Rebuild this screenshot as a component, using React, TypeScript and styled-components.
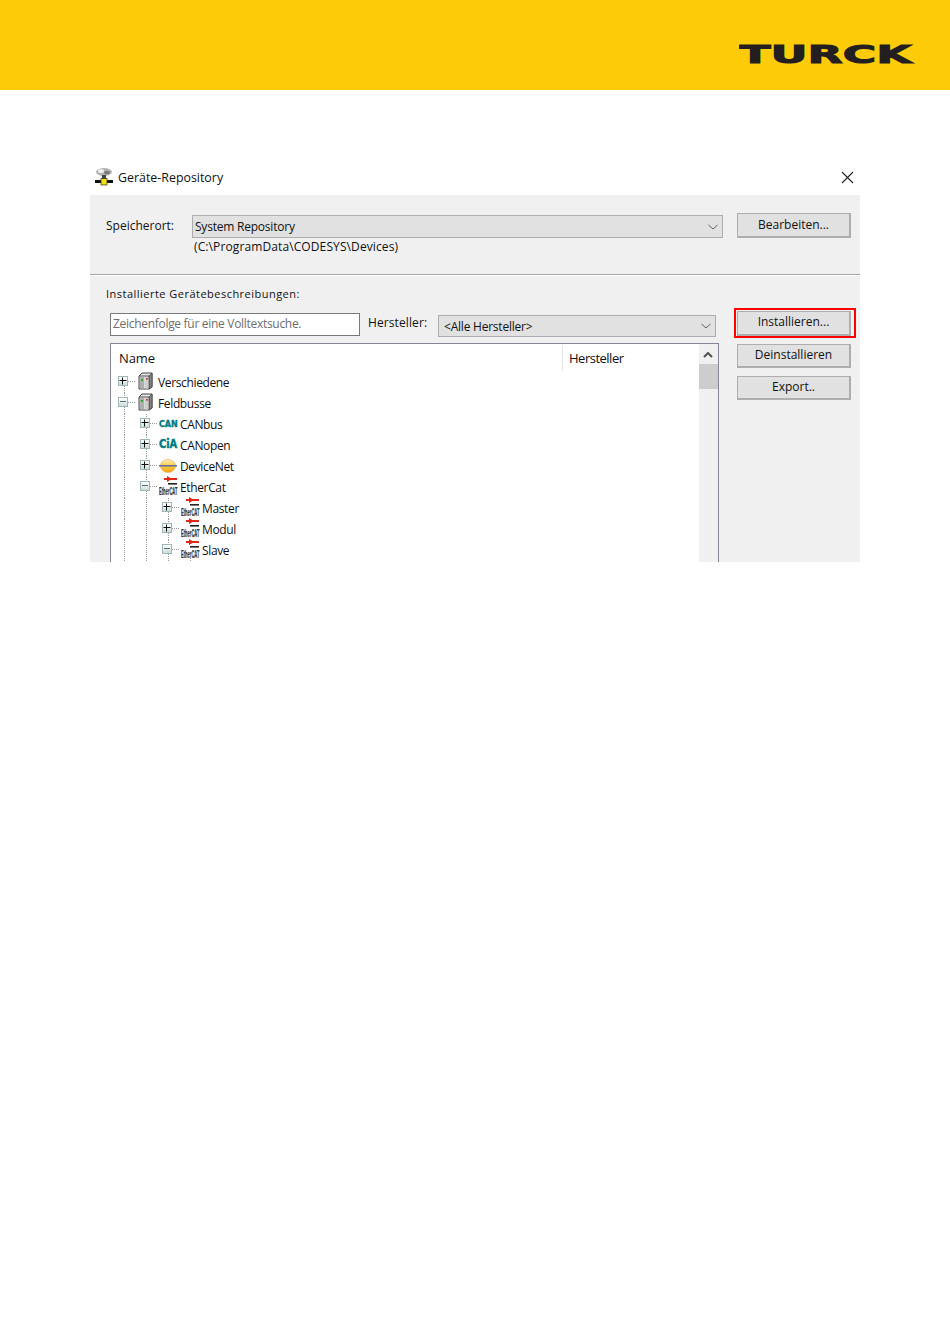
import React from "react";
import styled, { createGlobalStyle } from "styled-components";

const Global = createGlobalStyle`
  html, body { margin: 0; padding: 0; background: #fff; }
  body { font-family: "Open Sans", "Liberation Sans", sans-serif; color: #111; }
`;

const Page = styled.div`
  width: 950px;
  height: 1344px;
  overflow: hidden;
  background: #fff;
`;

const Banner = styled.header`
  height: 90px;
  background: #fecb08;
  display: flex;
  justify-content: flex-end;
  padding: 34px 33px 0 0;
  box-sizing: border-box;
`;

const Dialog = styled.section`
  width: 770px;
  margin: 75px 0 0 90px;
`;

const TitleBar = styled.div`
  height: 30px;
  box-sizing: border-box;
  padding: 0 0 6px 4px;
  display: flex;
  align-items: center;
  gap: 4px;
  font-size: 12.4px;
`;

const TitleText = styled.span`
  flex: 1;
  padding-top: 1px;
`;

const CloseButton = styled.span`
  display: flex;
  margin-right: 6px;
`;

const Panel = styled.div`
  height: 367px;
  overflow: hidden;
  background: #f0f0f0;
`;

const TopSection = styled.div`
  height: 80px;
  box-sizing: border-box;
  display: flex;
  align-items: flex-start;
  padding: 18px 9px 0 16px;
  border-bottom: 1px solid #a6a6a6;
`;

const LocationLabel = styled.label`
  width: 86px;
  font-size: 12px;
  line-height: 16px;
  margin-top: 5px;
`;

const LocationColumn = styled.div`
  width: 531px;
  margin: 2px 14px 0 0;
`;

const Select = styled.div<{ $width?: number; $height: number }>`
  width: ${(p) => (p.$width ? `${p.$width}px` : "100%")};
  height: ${(p) => p.$height}px;
  box-sizing: border-box;
  display: flex;
  align-items: center;
  justify-content: space-between;
  background: #e1e1e1;
  border: 1px solid #adadad;
  font-size: 12px;
  padding: 0 4px 0 2px;
  letter-spacing: -0.22px;
`;

const SelectText = styled.span<{ $inset?: number }>`
  padding-left: ${(p) => p.$inset ?? 0}px;
`;

const PathText = styled.div`
  font-size: 12px;
  line-height: 16px;
  margin: 1px 0 0 2px;
  letter-spacing: 0.11px;
`;

const Button = styled.button<{ $height?: number; $pad?: number; $marked?: boolean }>`
  position: relative;
  display: block;
  width: 114px;
  height: ${(p) => p.$height ?? 24}px;
  padding: 0 0 ${(p) => p.$pad ?? 3}px;
  box-sizing: border-box;
  background: #e1e1e1;
  border: 1px solid #adadad;
  border-right-width: 2px;
  border-bottom-width: 2px;
  font-family: inherit;
  font-size: 12px;
  letter-spacing: 0;
  color: #111;
  ${(p) =>
    p.$marked &&
    `&::after {
      content: "";
      position: absolute;
      top: -4px;
      left: -4px;
      right: -7px;
      bottom: -4px;
      border: 2px solid #ff0000;
    }`}
`;

const TopRule = styled.div`
  height: 1px;
  background: #fff;
`;

const LowerSection = styled.div`
  padding: 10px 9px 0 16px;
`;

const SectionLabel = styled.div`
  font-size: 11px;
  line-height: 16px;
  letter-spacing: 0.48px;
`;

const Body = styled.div`
  display: flex;
  margin-top: 11px;
`;

const LeftColumn = styled.div`
  width: 609px;
  margin: 0 18px 0 4px;
`;

const FilterRow = styled.div`
  display: flex;
  align-items: flex-start;
  height: 30px;
`;

const SearchBox = styled.div`
  width: 250px;
  height: 23px;
  box-sizing: border-box;
  border: 1px solid #7a7a7a;
  background: #fff;
  color: #6d6d6d;
  font-size: 12px;
  line-height: 20px;
  padding-left: 2px;
  letter-spacing: -0.3px;
`;

const MakerLabel = styled.span`
  width: 78px;
  padding: 2px 0 0 8px;
  box-sizing: border-box;
  font-size: 12px;
  line-height: 16px;
  letter-spacing: 0.1px;
`;

const MakerSelectSlot = styled.div`
  margin-top: 2px;
`;

const ListBox = styled.div`
  height: 300px;
  display: flex;
  background: #fff;
  border: 1px solid #828790;
  box-sizing: border-box;
`;

const TreeArea = styled.div`
  flex: 1;
  min-width: 0;
`;

const HeaderRow = styled.div`
  display: flex;
  height: 28px;
`;

const HeaderCell = styled.div<{ $width?: number }>`
  width: ${(p) => (p.$width ? `${p.$width}px` : "auto")};
  flex: ${(p) => (p.$width ? "none" : 1)};
  box-sizing: border-box;
  padding: 4px 0 0 ${(p) => (p.$width ? 8 : 6)}px;
  font-size: 13px;
  line-height: 18px;
  letter-spacing: ${(p) => (p.$width ? "-0.1px" : "-0.5px")};
  height: 26px;
  margin-top: 1px;
  border-right: ${(p) => (p.$width ? "1px solid #e5e5e5" : "none")};
`;

const Scrollbar = styled.div`
  width: 19px;
  background: #f0f0f0;
  display: flex;
  flex-direction: column;
  align-items: stretch;
`;

const ScrollArrow = styled.div`
  height: 20px;
  box-sizing: border-box;
  padding: 2px 2px 0 0;
  display: flex;
  justify-content: center;
  align-items: center;
`;

const ScrollThumb = styled.div`
  height: 25px;
  background: #cdcdcd;
`;

const Tree = styled.div`
  padding-left: 1px;
`;

const Row = styled.div`
  display: flex;
  height: 21px;
`;

const Guide = styled.span`
  position: relative;
  width: 22px;
  flex: none;
  &::before {
    content: "";
    position: absolute;
    left: 12px;
    top: 0;
    bottom: 0;
    border-left: 1px dotted #9a9a9a;
  }
`;

const ExpanderCell = styled(Guide)<{ $first?: boolean }>`
  &::before {
    top: ${(p) => (p.$first ? "9px" : "0")};
  }
  &::after {
    content: "";
    position: absolute;
    left: 16px;
    width: 7px;
    top: 9px;
    border-top: 1px dotted #9a9a9a;
  }
`;

const ExpanderBox = styled.span`
  position: absolute;
  z-index: 1;
  left: 6px;
  top: 4px;
  width: 10px;
  height: 10px;
  box-sizing: border-box;
  border: 1px solid #9fb6b6;
  background: linear-gradient(#fff, #cfdcdc);
  display: block;
`;

const Sign = styled.svg`
  display: block;
`;

const IconSlot = styled.span<{ $tail?: boolean }>`
  position: relative;
  width: 24px;
  flex: none;
  display: flex;
  align-items: flex-start;
  ${(p) =>
    p.$tail &&
    `&::after {
      content: "";
      position: absolute;
      left: 12px;
      top: 18px;
      bottom: 0;
      border-left: 1px dotted #9a9a9a;
    }`}
`;

const RowLabel = styled.span`
  font-size: 12px;
  line-height: 16px;
  padding-top: 3px;
  letter-spacing: -0.36px;
  color: #111;
`;

const ButtonColumn = styled.div`
  display: flex;
  flex-direction: column;
  gap: 8px;
  margin-top: -2px;
`;

const IconWrap = styled.span<{ $x: number; $y: number }>`
  display: block;
  margin: ${(p) => p.$y}px 0 0 ${(p) => p.$x}px;
`;

const Turck = () => (
  <svg width="178" height="34" viewBox="0 0 178 34" role="img" aria-label="TURCK">
    <text
      transform="translate(0.5 29) scale(1.9 1)"
      fontFamily="'DejaVu Sans', sans-serif"
      fontWeight="700"
      fontSize="24"
      fill="#231f20"
      stroke="#231f20"
      strokeWidth="1"
    >
      TURCK
    </text>
  </svg>
);

const CloseIcon = () => (
  <svg width="13" height="13" viewBox="0 0 13 13">
    <path d="M1 1 L12 12 M12 1 L1 12" stroke="#222" strokeWidth="1.1" fill="none" />
  </svg>
);

const Chevron = ({ up }: { up?: boolean }) => (
  <svg width="10" height="6" viewBox="0 0 10 6">
    <path
      d={up ? "M1 5 L5 1 L9 5" : "M0.5 1 L5 5 L9.5 1"}
      stroke={up ? "#505050" : "#606060"}
      strokeWidth={up ? 2 : 1}
      fill="none"
    />
  </svg>
);

const RepoIcon = () => (
  <svg width="20" height="20" viewBox="0 0 20 20">
    <ellipse cx="10" cy="5" rx="8" ry="4" fill="#b4b4b4" />
    <ellipse cx="7" cy="4" rx="3" ry="2" fill="#eee" />
    <ellipse cx="13" cy="5.5" rx="3" ry="1.8" fill="#7c7c7c" />
    <rect x="8" y="8" width="4" height="5" fill="#444" />
    <rect x="1" y="13" width="18" height="3" fill="#111" />
    <rect x="7" y="11.5" width="6" height="6.5" fill="#f4e000" stroke="#333" strokeWidth="0.7" />
  </svg>
);

const CabinetIcon = () => (
  <svg width="16" height="18" viewBox="0 0 16 18">
    <path d="M2 4 L5 1 H15 V15 L12 17 H2 Z" fill="#e4e4e4" stroke="#444" strokeWidth="1" />
    <path d="M12 4 L15 1 V15 L12 17 Z" fill="#858585" stroke="#444" strokeWidth="0.8" />
    <path d="M2 4 H12 V17" fill="none" stroke="#555" strokeWidth="1" />
    <rect x="3" y="5" width="4" height="11.5" fill="#aeaeae" />
    <rect x="7.5" y="5" width="4" height="11.5" fill="#cfcfcf" />
    <rect x="4" y="7" width="2" height="1.8" fill="#15b41e" />
    <rect x="9" y="6.2" width="2" height="1.3" fill="#c02020" />
  </svg>
);

const CanIcon = () => (
  <svg width="20" height="14" viewBox="0 0 20 14">
    <text x="0" y="8.5" fontFamily="'DejaVu Sans', sans-serif" fontWeight="700" fontSize="8" fill="#007c80" stroke="#007c80" strokeWidth="0.35">
      CAN
    </text>
  </svg>
);

const CiaIcon = () => (
  <svg width="20" height="20" viewBox="0 0 20 20">
    <text transform="translate(0 15) scale(0.76 1)" fontFamily="'DejaVu Sans', sans-serif" fontWeight="700" fontSize="13" fill="#007c80" stroke="#007c80" strokeWidth="0.5">
      CiA
    </text>
  </svg>
);

const NetIcon = () => (
  <svg width="20" height="16" viewBox="0 0 20 16">
    <defs>
      <linearGradient id="netFill" x1="0" y1="0" x2="0" y2="1">
        <stop offset="0" stopColor="#fff1c0" />
        <stop offset="0.5" stopColor="#ffc93a" />
        <stop offset="1" stopColor="#f0a818" />
      </linearGradient>
    </defs>
    <ellipse cx="9" cy="8" rx="7.5" ry="6.5" fill="url(#netFill)" stroke="#d8a440" strokeWidth="0.6" />
    <rect x="0" y="7" width="18" height="1.6" fill="#5f6fa8" />
  </svg>
);

const EtherIcon = () => (
  <svg width="20" height="20" viewBox="0 0 20 20">
    <rect x="5" y="2" width="13" height="2" fill="#e02818" />
    <path d="M8 0 L13 3 L8 6 Z" fill="#e02818" />
    <rect x="9" y="7" width="9" height="1.6" fill="#222" />
    <text transform="translate(0 18.5) scale(0.37 1)" fontFamily="'Liberation Sans', sans-serif" fontWeight="700" fontSize="11" fill="#333" stroke="#333" strokeWidth="0.25">
      EtherCAT
    </text>
  </svg>
);

type Item = {
  label: string;
  level: number;
  open: boolean;
  icon: React.ReactNode;
  x: number;
  y: number;
  first?: boolean;
  tail?: boolean;
};

const items: Item[] = [
  { label: "Verschiedene", level: 0, open: false, icon: <CabinetIcon />, x: 3, y: 0, first: true },
  { label: "Feldbusse", level: 0, open: true, icon: <CabinetIcon />, x: 3, y: 0 },
  { label: "CANbus", level: 1, open: false, icon: <CanIcon />, x: 3, y: 1 },
  { label: "CANopen", level: 1, open: false, icon: <CiaIcon />, x: 3, y: -2 },
  { label: "DeviceNet", level: 1, open: false, icon: <NetIcon />, x: 3, y: 1 },
  { label: "EtherCat", level: 1, open: true, icon: <EtherIcon />, x: 3, y: -1 },
  { label: "Master", level: 2, open: false, icon: <EtherIcon />, x: 3, y: -1 },
  { label: "Modul", level: 2, open: false, icon: <EtherIcon />, x: 3, y: -1 },
  { label: "Slave", level: 2, open: true, icon: <EtherIcon />, x: 3, y: -1, tail: true },
];

const Expander = ({ open }: { open: boolean }) => (
  <ExpanderBox>
    <Sign width="8" height="8" viewBox="0 0 8 8">
      <path d={open ? "M1 3.5 H7" : "M0.5 3.5 H7.5 M3.5 0.5 V7.5"} stroke={open ? "#5a6e70" : "#111"} strokeWidth="1" />
    </Sign>
  </ExpanderBox>
);

export default function App() {
  return (
    <Page>
      <Global />
      <Banner>
        <Turck />
      </Banner>
      <Dialog>
        <TitleBar>
          <RepoIcon />
          <TitleText>Geräte-Repository</TitleText>
          <CloseButton>
            <CloseIcon />
          </CloseButton>
        </TitleBar>
        <Panel>
          <TopSection>
            <LocationLabel>Speicherort:</LocationLabel>
            <LocationColumn>
              <Select $height={23}>
                <SelectText>System Repository</SelectText>
                <Chevron />
              </Select>
              <PathText>(C:\ProgramData\CODESYS\Devices)</PathText>
            </LocationColumn>
            <Button $height={25} $pad={1}>Bearbeiten...</Button>
          </TopSection>
          <TopRule />
          <LowerSection>
            <SectionLabel>Installierte Gerätebeschreibungen:</SectionLabel>
            <Body>
              <LeftColumn>
                <FilterRow>
                  <SearchBox>Zeichenfolge für eine Volltextsuche.</SearchBox>
                  <MakerLabel>Hersteller:</MakerLabel>
                  <MakerSelectSlot>
                    <Select $width={278} $height={22}>
                      <SelectText $inset={3}>&lt;Alle Hersteller&gt;</SelectText>
                      <Chevron />
                    </Select>
                  </MakerSelectSlot>
                </FilterRow>
                <ListBox>
                  <TreeArea>
                    <HeaderRow>
                      <HeaderCell $width={452}>Name</HeaderCell>
                      <HeaderCell>Hersteller</HeaderCell>
                    </HeaderRow>
                    <Tree>
                      {items.map((it) => (
                        <Row key={it.label}>
                          {Array.from({ length: it.level }).map((_, i) => (
                            <Guide key={i} />
                          ))}
                          <ExpanderCell $first={it.first}>
                            <Expander open={it.open} />
                          </ExpanderCell>
                          <IconSlot $tail={it.tail}>
                            <IconWrap $x={it.x} $y={it.y}>
                              {it.icon}
                            </IconWrap>
                          </IconSlot>
                          <RowLabel>{it.label}</RowLabel>
                        </Row>
                      ))}
                    </Tree>
                  </TreeArea>
                  <Scrollbar>
                    <ScrollArrow>
                      <Chevron up />
                    </ScrollArrow>
                    <ScrollThumb />
                  </Scrollbar>
                </ListBox>
              </LeftColumn>
              <ButtonColumn>
                <Button $height={25} $pad={4} $marked>Installieren...</Button>
                <Button>Deinstallieren</Button>
                <Button>Export..</Button>
              </ButtonColumn>
            </Body>
          </LowerSection>
        </Panel>
      </Dialog>
    </Page>
  );
}
